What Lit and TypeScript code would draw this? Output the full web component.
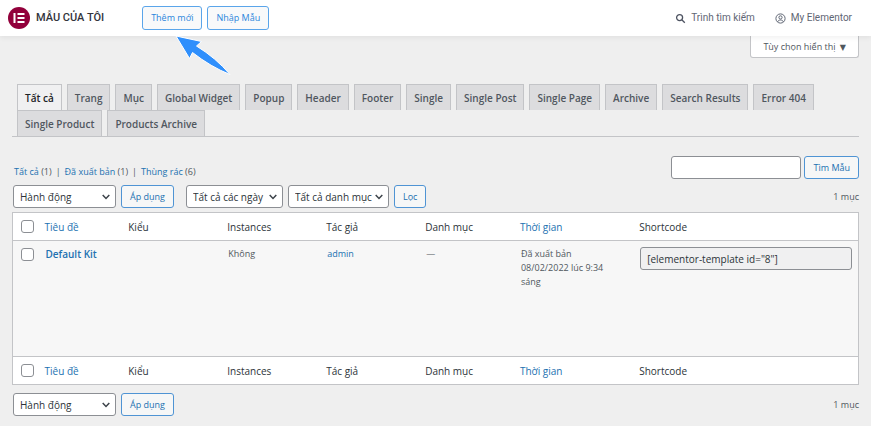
import { LitElement, html, css } from "lit";
import { customElement, property, state } from "lit/decorators.js";
import { classMap } from "lit/directives/class-map.js";

const controls = css`
  * { box-sizing: border-box; }
  button, input, select { font: inherit; margin: 0; }
  .button {
    height: 23px;
    padding: 0 8px;
    border: 1px solid #4f94d4;
    border-radius: 3px;
    background: #f6f7f7;
    color: #2271b1;
    font-size: 9px;
    white-space: nowrap;
    cursor: pointer;
  }
`;

@customElement("top-bar")
export class TopBar extends LitElement {
  static styles = [controls, css`
    :host {
      display: flex;
      align-items: center;
      height: 36px;
      padding: 0 19px 0 8px;
      background: #fff;
      box-shadow: 0 2px 5px rgba(0, 0, 0, 0.06);
      font: 10px/16px Roboto, "Liberation Sans", sans-serif;
      position: relative;
      z-index: 1;
    }
    .logo { width: 22px; height: 22px; }
    h1 {
      margin: 0 38px 0 6px;
      font-size: 11px;
      font-weight: 500;
      color: #32343c;
      white-space: nowrap;
    }
    .actions { display: flex; gap: 5px; position: relative; font-family: "Open Sans", "Noto Sans", sans-serif; }
    .actions .button { height: 24px; border-color: #5aa5ea; color: #2a86dc; background: #f8f9fa; }
    .pointer { position: absolute; left: 32px; top: 28px; width: 58px; height: 44px; }
    nav { display: flex; gap: 20px; margin-left: auto; }
    nav a { display: flex; align-items: center; gap: 5px; color: #5f6674; text-decoration: none; white-space: nowrap; }
    nav svg { width: 11px; height: 11px; }
  `];

  render() {
    return html`
      <svg class="logo" viewBox="0 0 22 22" aria-hidden="true">
        <circle cx="11" cy="11" r="11" fill="#92003b" />
        <path fill="#fff" d="M5.500 6h2v10h-2zM9.500 6h7v2h-7zM9.500 10h7v2h-7zM9.500 14h7v2h-7z" />
      </svg>
      <h1>MẪU CỦA TÔI</h1>
      <div class="actions">
        <button class="button">Thêm mới</button>
        <button class="button">Nhập Mẫu</button>
        <svg class="pointer" viewBox="0 0 58 44" aria-hidden="true">
          <path fill="#2f8ffc" stroke="#fff" stroke-width="1" stroke-linejoin="round"
            d="M2 2 27.500 7.500 22.500 12Q42 24 56 40.500Q37 33 18.500 18.500L15.500 24.500Z" />
        </svg>
      </div>
      <nav>
        <a href="#search">
          <svg viewBox="0 0 11 11" fill="none" stroke="#4d5361" stroke-width="1.300"><circle cx="4.600" cy="4.600" r="3" /><path d="m7 7 2.800 2.800" /></svg>
          Trình tìm kiếm
        </a>
        <a href="#account">
          <svg viewBox="0 0 11 11" fill="none" stroke="#5f6674"><circle cx="5.500" cy="5.500" r="4.600" /><circle cx="5.500" cy="4.400" r="1.600" /><path d="M2.700 8.800c.6-2.400 5-2.400 5.600 0" /></svg>
          My Elementor
        </a>
      </nav>
    `;
  }
}

@customElement("select-box")
export class SelectBox extends LitElement {
  @property({ attribute: false }) options: string[] = [];
  @property() label = "";

  static styles = [controls, css`
    :host { display: grid; align-items: center; }
    select, svg { grid-area: 1 / 1; }
    select {
      appearance: none;
      width: 100%;
      height: 23px;
      padding: 0 0 0 6px;
      border: 1px solid #8c8f94;
      border-radius: 3px;
      background: #fff;
      color: #2c3338;
    }
    svg { width: 8px; height: 6px; margin-right: 6px; justify-self: end; pointer-events: none; }
  `];

  render() {
    return html`
      <select aria-label=${this.label}>${this.options.map((o) => html`<option>${o}</option>`)}</select>
      <svg viewBox="0 0 8 6" fill="none" stroke="#3c434a" stroke-width="1.500" aria-hidden="true"><path d="m.700 1 3.300 3.500L7.300 1" /></svg>
    `;
  }
}

const TABS = [
  "Tất cả", "Trang", "Mục", "Global Widget", "Popup", "Header", "Footer", "Single",
  "Single Post", "Single Page", "Archive", "Search Results", "Error 404",
  "Single Product", "Products Archive",
];

const COLUMNS = [
  { name: "Tiêu đề", key: "title", sortable: true },
  { name: "Kiểu", key: "kind", sortable: false },
  { name: "Instances", key: "instances", sortable: false },
  { name: "Tác giả", key: "author", sortable: false },
  { name: "Danh mục", key: "category", sortable: false },
  { name: "Thời gian", key: "date", sortable: true },
  { name: "Shortcode", key: "shortcode", sortable: false },
];

@customElement("app-root")
export class AppRoot extends LitElement {
  @state() private tab = "Tất cả";

  static styles = [controls, css`
    :host {
      display: block;
      min-height: 100vh;
      background: #efefef;
      color: #50575e;
      font: 10px/14px "Open Sans", "Noto Sans", sans-serif;
    }
    a { color: #2271b1; text-decoration: none; }
    main { padding: 0 12px 12px; }
    .options { display: flex; justify-content: flex-end; margin-bottom: 26px; }
    .options button {
      height: 22px;
      padding: 0 12px;
      border: 1px solid #c3c4c7;
      border-top: 0;
      border-radius: 0 0 3px 3px;
      background: #fff;
      color: #50575e;
      font-size: 9px;
    }
    .caret { margin-left: 2px; font: 8px "DejaVu Sans", sans-serif; }
    .tabs {
      display: flex;
      flex-wrap: wrap;
      column-gap: 5px;
      padding-left: 5px;
      border-bottom: 1px solid #c3c4c7;
    }
    .tab {
      height: 26px;
      padding: 0 7px;
      border: 1px solid #c3c4c7;
      border-bottom: 0;
      background: #dcdcde;
      color: #50575e;
      font-weight: 600;
      white-space: nowrap;
    }
    .tab.active { background: #f0f0f1; color: #1d2327; }
    .bar { display: flex; align-items: center; }
    .views { align-items: flex-end; margin-top: 19px; justify-content: space-between; }
    .links { display: flex; gap: 4px; padding: 0 0 0 2px; font-size: 9px; }
    .search { display: flex; gap: 3px; }
    .search input { width: 130px; }
    .field {
      height: 23px;
      padding: 0 6px;
      border: 1px solid #8c8f94;
      border-radius: 3px;
      background: #fff;
      color: #2c3338;
    }
    .filters { gap: 5px; margin: 6px 0 4px 1px; }
    .filters.bottom { margin: 8px 0 0 1px; }
    .action { width: 103px; }
    .days { width: 97px; margin-left: 7px; }
    .category { width: 101px; }
    .count { margin-left: auto; font-size: 9px; }
    table {
      width: 100%;
      table-layout: fixed;
      border-collapse: collapse;
      border: 1px solid #c3c4c7;
      background: #fff;
      color: #2c3338;
    }
    th, td { padding: 0 8px; text-align: left; font-weight: 400; }
    th { height: 28px; vertical-align: middle; }
    thead th { border-bottom: 1px solid #c3c4c7; }
    tfoot th { border-top: 1px solid #c3c4c7; }
    tbody { background: #f7f7f7; }
    td { height: 116px; padding: 6px 6px 0 9px; vertical-align: top; color: #50575e; font-size: 9px; }
    th.check, td.check { width: 24px; padding-left: 8px; padding-right: 0; }
    .title { width: 9.9%; }
    .kind, .instances, .author { width: 11.7%; }
    .category-cell { width: 11.2%; }
    .date { width: 14.1%; }
    .title-link { font-size: 10px; font-weight: 600; }
    .check input {
      appearance: none;
      display: block;
      width: 13px;
      height: 13px;
      border: 1px solid #8c8f94;
      border-radius: 3px;
      background: #fff;
    }
    td.check { padding-top: 7px; }
    .code { width: 100%; background: #f0f0f1; display: block; font-size: 10px; }
  `];

  private headings(place: string) {
    return html`<tr>
      <th class="check"><input type="checkbox" aria-label=${"Chọn tất cả " + place} /></th>
      ${COLUMNS.map((c) => html`<th scope="col" class=${c.key === "category" ? "category-cell" : c.key}>
        ${c.sortable ? html`<a href="#sort">${c.name}</a>` : c.name}
      </th>`)}
    </tr>`;
  }

  private bulk() {
    return html`
      <select-box class="action" label="Hành động" .options=${["Hành động"]}></select-box>
      <button class="button">Áp dụng</button>
    `;
  }

  render() {
    return html`
      <top-bar></top-bar>
      <main>
        <div class="options"><button>Tùy chọn hiển thị <span class="caret">▼</span></button></div>
        <div class="tabs">
          ${TABS.map((t) => html`<button
            class=${classMap({ tab: true, active: t === this.tab })}
            @click=${() => (this.tab = t)}>${t}</button>`)}
        </div>
        <div class="bar views">
          <div class="links">
            <span><a href="#all">Tất cả</a> (1)</span><span>|</span>
            <span><a href="#published">Đã xuất bản</a> (1)</span><span>|</span>
            <span><a href="#trash">Thùng rác</a> (6)</span>
          </div>
          <div class="search">
            <input class="field" type="search" aria-label="Tìm Mẫu" />
            <button class="button">Tìm Mẫu</button>
          </div>
        </div>
        <div class="bar filters">
          ${this.bulk()}
          <select-box class="days" label="Ngày" .options=${["Tất cả các ngày"]}></select-box>
          <select-box class="category" label="Danh mục" .options=${["Tất cả danh mục"]}></select-box>
          <button class="button">Lọc</button>
          <span class="count">1 mục</span>
        </div>
        <table>
          <thead>${this.headings("trên")}</thead>
          <tbody>
            <tr>
              <td class="check"><input type="checkbox" aria-label="Chọn Default Kit" /></td>
              <td><a class="title-link" href="#kit">Default Kit</a></td>
              <td></td>
              <td>Không</td>
              <td><a href="#admin">admin</a></td>
              <td>—</td>
              <td>Đã xuất bản<br />08/02/2022 lúc 9:34<br />sáng</td>
              <td><input class="field code" readonly aria-label="Shortcode" .value=${'[elementor-template id="8"]'} /></td>
            </tr>
          </tbody>
          <tfoot>${this.headings("dưới")}</tfoot>
        </table>
        <div class="bar filters bottom">
          ${this.bulk()}
          <span class="count">1 mục</span>
        </div>
      </main>
    `;
  }
}
